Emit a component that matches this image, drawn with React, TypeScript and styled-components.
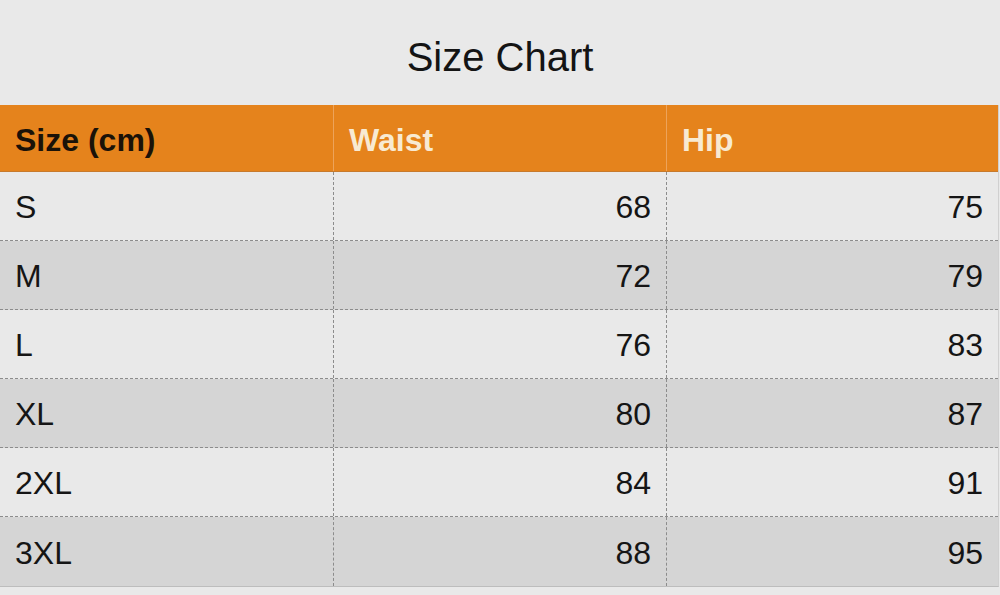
import styled, { createGlobalStyle } from 'styled-components';

const Global = createGlobalStyle`
  html, body { margin: 0; padding: 0; background: #e9e9e9; }
  body { font-family: "Liberation Sans", Arial, sans-serif; color: #151515; }
`;

const Page = styled.div`
  width: 1000px;
  height: 595px;
  background: #e9e9e9;
  overflow: hidden;
`;

const Title = styled.h1`
  margin: 0;
  height: 105px;
  display: flex;
  align-items: center;
  justify-content: center;
  padding-top: 10px;
  box-sizing: border-box;
  font-size: 40px;
  font-weight: 400;
  color: #141414;
`;

const Table = styled.div`
  width: 998px;
  border-right: 1px solid #d0d0d0;
  border-bottom: 1px solid #bdbdbd;
`;

const HeadRow = styled.div`
  display: grid;
  grid-template-columns: 333px 333px 1fr;
  height: 67px;
  background: #e5831c;
  border-bottom: 1px solid #c77a2c;
  box-sizing: border-box;
`;

const HeadCell = styled.div<{ $light?: boolean }>`
  display: flex;
  align-items: center;
  padding: 4px 15px 0;
  font-size: 32px;
  font-weight: 700;
  color: ${(p) => (p.$light ? '#f8ead2' : '#1a1208')};
  & + & { border-left: 1px solid #eda35a; }
`;

const Row = styled.div<{ $shade?: boolean }>`
  display: grid;
  grid-template-columns: 333px 333px 1fr;
  height: 69px;
  box-sizing: border-box;
  background: ${(p) => (p.$shade ? '#d5d5d5' : '#e9e9e9')};
  border-bottom: 1px dashed #8c8c8c;
  &:last-child { border-bottom: none; }
`;

const Cell = styled.div<{ $num?: boolean }>`
  display: flex;
  align-items: center;
  justify-content: ${(p) => (p.$num ? 'flex-end' : 'flex-start')};
  padding: ${(p) => (p.$num ? '3px 15px 0 0' : '3px 0 0 15px')};
  font-size: 32px;
  color: #151515;
  & + & { border-left: 1px dashed #8c8c8c; }
`;

const rows = [
  ['S', 68, 75],
  ['M', 72, 79],
  ['L', 76, 83],
  ['XL', 80, 87],
  ['2XL', 84, 91],
  ['3XL', 88, 95],
] as const;

export default function App() {
  return (
    <Page>
      <Global />
      <Title>Size Chart</Title>
      <Table>
        <HeadRow>
          <HeadCell>Size (cm)</HeadCell>
          <HeadCell $light>Waist</HeadCell>
          <HeadCell $light>Hip</HeadCell>
        </HeadRow>
        {rows.map(([size, waist, hip], i) => (
          <Row key={size} $shade={i % 2 === 1}>
            <Cell>{size}</Cell>
            <Cell $num>{waist}</Cell>
            <Cell $num>{hip}</Cell>
          </Row>
        ))}
      </Table>
    </Page>
  );
}
